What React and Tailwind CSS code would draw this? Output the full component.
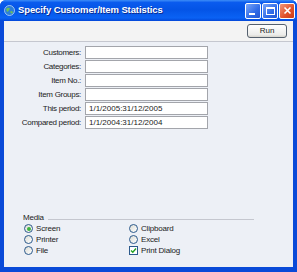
import React from 'react';

const fields = [
  { label: 'Customers:', value: '' },
  { label: 'Categories:', value: '' },
  { label: 'Item No.:', value: '' },
  { label: 'Item Groups:', value: '' },
  { label: 'This period:', value: '1/1/2005:31/12/2005' },
  { label: 'Compared period:', value: '1/1/2004:31/12/2004' },
];

function Radio({ checked, label }) {
  return (
    <div className="flex items-center h-[11px]">
      <span className="w-[9px] h-[9px] rounded-full border border-[#2c5a8c] bg-[linear-gradient(135deg,#dcdcd4,#ffffff)] flex items-center justify-center">
        {checked && <span className="w-[4px] h-[4px] rounded-full bg-[#3cb43c]" />}
      </span>
      <span className="ml-[3px] tracking-[-0.2px]">{label}</span>
    </div>
  );
}

function Check({ checked, label }) {
  return (
    <div className="flex items-center h-[11px]">
      <span className="w-[9px] h-[9px] border border-[#2c5a8c] bg-white flex items-center justify-center">
        {checked && (
          <svg width="7" height="7" viewBox="0 0 7 7">
            <path d="M1 3.5 L2.8 5.3 L6 1.5" stroke="#21a121" strokeWidth="1.4" fill="none" />
          </svg>
        )}
      </span>
      <span className="ml-[3px] tracking-[-0.2px]">{label}</span>
    </div>
  );
}

function TitleButton({ children, close }) {
  return (
    <div
      className={
        'w-[16px] h-[16px] rounded-[2px] border border-white flex items-center justify-center ' +
        (close
          ? 'bg-[linear-gradient(135deg,#f0967a,#e0502a_60%,#c83c18)]'
          : 'bg-[linear-gradient(135deg,#7aa6f8,#2f6be8_60%,#2456d0)]')
      }
    >
      {children}
    </div>
  );
}

export default function App() {
  return (
    <div
      className="w-[297px] h-[272px] flex flex-col bg-[#0a4ad8] rounded-t-[6px] overflow-hidden text-[8px] text-[#222]"
      style={{ fontFamily: '"Liberation Sans", Arial, sans-serif' }}
    >
      {/* title bar */}
      <div className="h-[21px] flex items-center pl-[4px] pr-[2px] bg-[linear-gradient(to_bottom,#3d8df7_0%,#0a5bee_12%,#0454e6_45%,#0a62f4_85%,#0347d8_100%)]">
        <svg width="11" height="11" viewBox="0 0 11 11">
          <circle cx="5.5" cy="5.5" r="5" fill="#2d7fd8" stroke="#bfd8f5" strokeWidth="0.8" />
          <path d="M2 4 Q4 2 6 3.5 Q5 6 3 7 Z" fill="#6cc05a" />
          <path d="M6.5 6 Q8.5 5.5 9 7.5 Q7.5 9 6.5 8 Z" fill="#6cc05a" />
        </svg>
        <span className="ml-[3px] text-white font-bold text-[9.5px] tracking-[-0.1px] [text-shadow:1px_1px_0_#0a2a90]">
          Specify Customer/Item Statistics
        </span>
        <div className="ml-auto flex gap-[1px]">
          <TitleButton>
            <span className="w-[6px] h-[2px] bg-white mt-[7px] mr-[3px]" />
          </TitleButton>
          <TitleButton>
            <span className="w-[9px] h-[8px] border border-white border-t-2" />
          </TitleButton>
          <TitleButton close>
            <svg width="9" height="9" viewBox="0 0 9 9">
              <path d="M1.5 1.5 L7.5 7.5 M7.5 1.5 L1.5 7.5" stroke="white" strokeWidth="1.6" />
            </svg>
          </TitleButton>
        </div>
      </div>

      {/* client area */}
      <div className="flex-1 mx-[4px] mb-[5px] flex flex-col bg-[#edf0f6]">
        <div className="h-[21px] flex items-center justify-end pr-[6px] bg-[#f3f3f3] border-b border-[#c5c7cf]">
          <button className="w-[40px] h-[14px] rounded-[3px] border border-[#55606e] bg-[linear-gradient(to_bottom,#ffffff,#ececea_80%,#d6d4cc)] text-[8px] leading-none">
            Run
          </button>
        </div>

        <div className="pt-[4px] flex flex-col gap-[1px]">
          {fields.map((f) => (
            <div key={f.label} className="flex items-center h-[13px]">
              <span className="w-[77px] text-right tracking-[-0.3px]">{f.label}</span>
              <div className="ml-[4px] w-[123px] h-[13px] bg-white border border-[#a3a5ab] pl-[3px] flex items-center">
                {f.value}
              </div>
            </div>
          ))}
        </div>

        <div className="mt-auto pb-[11px] pl-[19px]">
          <div className="flex items-center h-[10px] mr-[39px]">
            <span className="tracking-[-0.2px]">Media</span>
            <span className="flex-1 ml-[4px] mt-[3px] border-t border-[#c5c7cf]" />
          </div>
          <div className="grid grid-cols-[105px_1fr] pl-[1px]">
            <Radio checked label="Screen" />
            <Radio label="Clipboard" />
            <Radio label="Printer" />
            <Radio label="Excel" />
            <Radio label="File" />
            <Check checked label="Print Dialog" />
          </div>
        </div>
      </div>
    </div>
  );
}
